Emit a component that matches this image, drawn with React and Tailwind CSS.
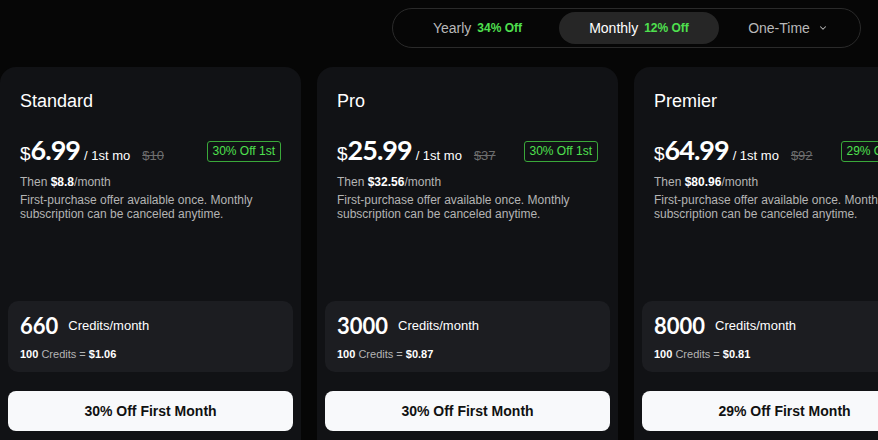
import React from 'react';

const PLANS = [
  { name: 'Standard', price: '6.99', old: '$10', badge: '30% Off 1st', then: '$8.8', credits: '660', per: '$1.06', cta: '30% Off First Month' },
  { name: 'Pro', price: '25.99', old: '$37', badge: '30% Off 1st', then: '$32.56', credits: '3000', per: '$0.87', cta: '30% Off First Month' },
  { name: 'Premier', price: '64.99', old: '$92', badge: '29% Off 1st', then: '$80.96', credits: '8000', per: '$0.81', cta: '29% Off First Month' },
];

const NUM_FONT = { fontFamily: 'Lato, "Open Sans", sans-serif' };

function PlanCard({ plan }) {
  return (
    <div className="w-[301px] shrink-0 h-[390px] rounded-[16px] bg-[#111215] flex flex-col">
      <div className="px-5 pt-[23px]">
        <h2 className="text-[18px] leading-[22px] text-white">{plan.name}</h2>

        {/* Price row */}
        <div className="mt-[23px] h-[32px] flex items-center">
          <div className="flex items-baseline text-white">
            <span className="text-[19px]">$</span>
            <span className="text-[27px] leading-[32px] font-bold tracking-[-1px]" style={NUM_FONT}>{plan.price}</span>
            <span className="text-[13px] ml-[4px]">/ 1st mo</span>
            <span className="text-[13px] text-[#6e6e6e] line-through ml-[12px]">{plan.old}</span>
          </div>
          <span className="ml-auto shrink-0 h-[21px] px-[5px] flex items-center rounded-[3px] border border-[#3aa83a] text-[12px] text-[#4fe04f]">
            {plan.badge}
          </span>
        </div>

        <p className="mt-[8px] text-[12px] leading-[14px] text-[#b4b4b4]">
          Then <span className="font-bold text-white">{plan.then}</span>/month
        </p>
        <p className="mt-[4px] text-[12px] leading-[14px] text-[#b4b4b4]">
          First-purchase offer available once. Monthly subscription can be canceled anytime.
        </p>
      </div>

      <div className="px-2 mt-[80px]">
        {/* Credits box */}
        <div className="h-[71px] rounded-[10px] bg-[#1c1d21] px-3 pt-[13px]">
          <div className="flex items-center">
            <span className="text-[22px] leading-[24px] font-bold text-white" style={NUM_FONT}>{plan.credits}</span>
            <span className="ml-[10px] text-[13px] text-white">Credits/month</span>
          </div>
          <p className="mt-[8px] text-[11px] text-[#b4b4b4]">
            <span className="font-bold text-white">100</span> Credits = <span className="font-bold text-white">{plan.per}</span>
          </p>
        </div>

        <button className="mt-[19px] w-full h-[40px] rounded-[8px] bg-[#f8f9fb] text-[14px] font-bold text-[#111]">
          {plan.cta}
        </button>
      </div>
    </div>
  );
}

export default function App() {
  return (
    <div
      className="w-[878px] h-[440px] overflow-hidden bg-[#060606]"
      style={{ fontFamily: '"Liberation Sans", Arial, sans-serif' }}
    >
      {/* Billing toggle */}
      <div className="flex justify-end pr-[17px] pt-[8px]">
        <div className="w-[469px] h-[40px] rounded-full border border-[#2a2a2a] flex items-center px-[3px]">
          <div className="w-[163px] flex items-center justify-center gap-[6px] text-[14px]">
            <span className="text-[#b8b8b8]">Yearly</span>
            <span className="text-[12px] font-bold text-[#4fe04f]">34% Off</span>
          </div>
          <div className="w-[160px] h-[32px] rounded-full bg-[#262626] flex items-center justify-center gap-[6px] text-[14px]">
            <span className="text-white">Monthly</span>
            <span className="text-[12px] font-bold text-[#4fe04f]">12% Off</span>
          </div>
          <div className="flex-1 flex items-center justify-center gap-[8px] text-[14px] text-[#b8b8b8]">
            <span>One-Time</span>
            <svg width="10" height="10" viewBox="0 0 24 24" fill="none" stroke="currentColor" strokeWidth="2.5" strokeLinecap="round" strokeLinejoin="round">
              <path d="M6 9l6 6 6-6" />
            </svg>
          </div>
        </div>
      </div>

      {/* Plan cards */}
      <div className="mt-[19px] flex gap-[16px]">
        {PLANS.map((p) => (
          <PlanCard key={p.name} plan={p} />
        ))}
      </div>
    </div>
  );
}
